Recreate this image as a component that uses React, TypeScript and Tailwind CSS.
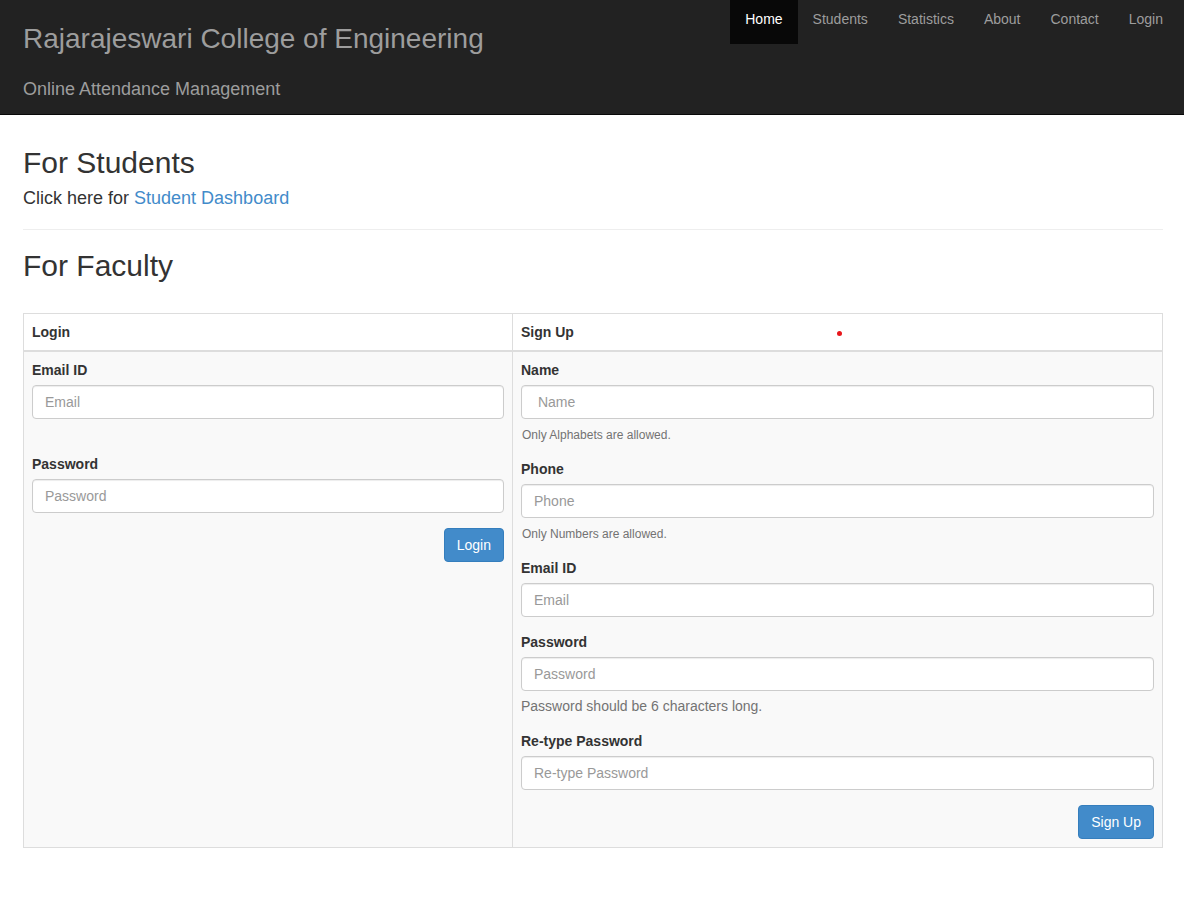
import React from "react";

const navItems = ["Home", "Students", "Statistics", "About", "Contact", "Login"];

export default function App() {
  return (
    <div className="min-h-[904px] bg-white font-['Liberation_Sans',Arial,sans-serif] text-[14px] text-[#333]">
      {/* header */}
      <header className="flex h-[115px] items-start justify-between border-b border-[#080808] bg-[#222]">
        <div className="pl-[23px]">
          <h1 className="pt-[19px] text-[28px] leading-[40px] text-[#9d9d9d]">
            Rajarajeswari College of Engineering
          </h1>
          <p className="mt-[18px] text-[18px] leading-[24px] text-[#9d9d9d]">
            Online Attendance Management
          </p>
        </div>
        <nav className="mr-[6px] flex">
          {navItems.map((item) => (
            <a
              key={item}
              href="#"
              className={
                item === "Home"
                  ? "bg-[#080808] px-[15px] pt-[9px] pb-[15px] leading-[20px] text-white"
                  : "px-[15px] pt-[9px] pb-[15px] leading-[20px] text-[#9d9d9d]"
              }
            >
              {item}
            </a>
          ))}
        </nav>
      </header>

      <main className="pl-[23px] pr-[21px] pt-[31px]">
        <h2 className="text-[30px] leading-[33px]">For Students</h2>
        <p className="mt-[6px] text-[18px] leading-[26px]">
          Click here for{" "}
          <a href="#" className="text-[#428bca]">
            Student Dashboard
          </a>
        </p>
        <hr className="mt-[18px] border-t border-[#eee]" />
        <h2 className="mt-[19px] text-[30px] leading-[33px]">For Faculty</h2>

        {/* login / sign up table */}
        <div className="mt-[31px] grid grid-cols-[488px_1fr] border border-[#ddd]">
          <div className="border-b-2 border-[#ddd] bg-white p-[8px] font-bold leading-[20px]">Login</div>
          <div className="relative border-b-2 border-l border-[#ddd] bg-white p-[8px] font-bold leading-[20px]">
            Sign Up
            <span className="absolute left-[324px] top-[17px] h-[5px] w-[5px] rounded-full bg-[#e8161b]" />
          </div>

          <div className="bg-[#f9f9f9] p-[8px]">
            <Field label="Email ID" placeholder="Email" />
            <div className="h-[20px]" />
            <div className="mt-[15px]">
              <Field label="Password" placeholder="Password" type="password" />
            </div>
            <div className="mt-[15px] flex justify-end">
              <Btn>Login</Btn>
            </div>
          </div>

          <div className="border-l border-[#ddd] bg-[#f9f9f9] p-[8px]">
            <Field label="Name" placeholder=" Name" />
            <Help>Only Alphabets are allowed.</Help>
            <div className="mt-[15px]">
              <Field label="Phone" placeholder="Phone" />
            </div>
            <Help>Only Numbers are allowed.</Help>
            <div className="mt-[15px]">
              <Field label="Email ID" placeholder="Email" />
            </div>
            <div className="mt-[15px]">
              <Field label="Password" placeholder="Password" type="password" />
            </div>
            <p className="mt-[5px] leading-[20px] text-[#737373]">Password should be 6 characters long.</p>
            <div className="mt-[15px]">
              <Field label="Re-type Password" placeholder="Re-type Password" type="password" />
            </div>
            <div className="mt-[15px] flex justify-end">
              <Btn>Sign Up</Btn>
            </div>
          </div>
        </div>
      </main>
    </div>
  );
}

function Help({ children }: { children: React.ReactNode }) {
  return <p className="mt-[6px] h-[19px] pl-[1px] text-[12px] leading-[20px] text-[#737373]">{children}</p>;
}

function Field({ label, placeholder, type = "text" }: { label: string; placeholder: string; type?: string }) {
  return (
    <div>
      <label className="mb-[5px] block font-bold leading-[20px]">{label}</label>
      <input
        type={type}
        placeholder={placeholder}
        className="block h-[34px] w-full rounded-[4px] border border-[#ccc] bg-white px-[12px] text-[14px] text-[#555] shadow-[inset_0_1px_1px_rgba(0,0,0,0.075)] outline-none placeholder:text-[#999]"
      />
    </div>
  );
}

function Btn({ children }: { children: React.ReactNode }) {
  return (
    <button className="h-[34px] rounded-[4px] border border-[#357ebd] bg-[#428bca] px-[12px] text-[14px] leading-[20px] text-white">
      {children}
    </button>
  );
}
